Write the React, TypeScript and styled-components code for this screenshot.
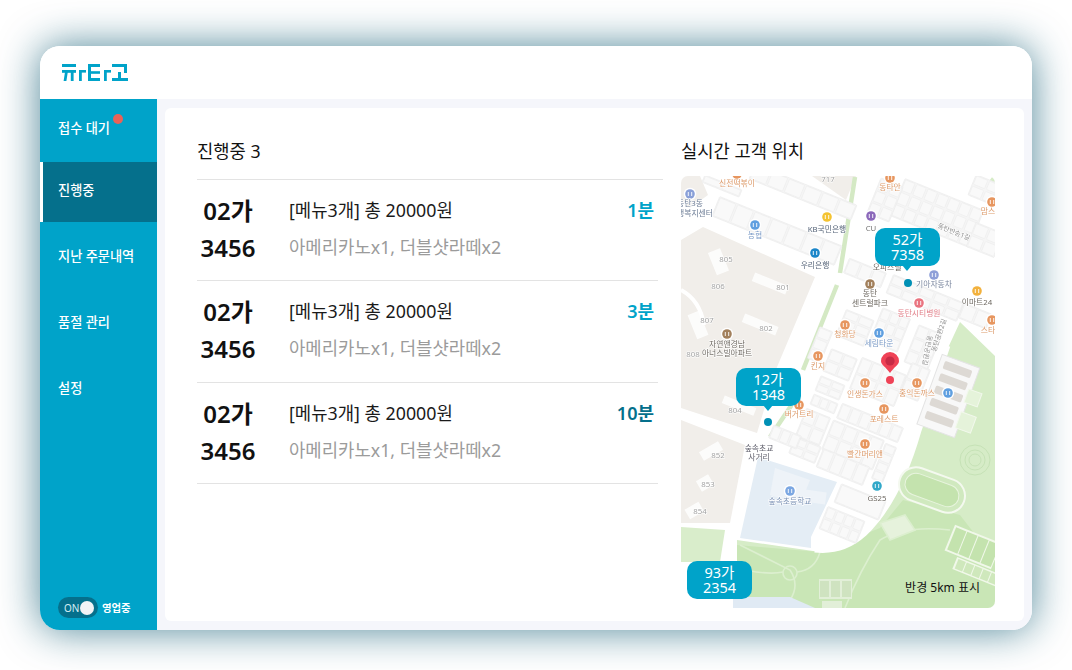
import React from 'react';
import styled, { createGlobalStyle } from 'styled-components';

const Global = createGlobalStyle`
  html, body { margin: 0; background: #fff; }
  body { font-family: "Noto Sans", "Noto Sans CJK KR", sans-serif; }
  * { box-sizing: border-box; }
`;
const Page = styled.div`
  width: 1072px; height: 670px; padding: 46px 40px 40px; overflow: hidden;
`;
const Frame = styled.div`
  width: 992px; height: 584px; border-radius: 20px; background: #fff; overflow: hidden;
  display: grid; grid-template-rows: 53px 1fr; grid-template-columns: 117px 1fr;
  box-shadow: 0 0 40px rgba(10, 88, 112, .72);
`;
const Header = styled.header`
  grid-column: 1 / 3; display: flex; align-items: center; padding-left: 22px; background: #fff;
`;
const Sidebar = styled.aside`
  background: #00a3c9; display: flex; flex-direction: column; justify-content: space-between;
  padding-bottom: 12px;
`;
const Nav = styled.nav`display: flex; flex-direction: column;`;
const NavItem = styled.div<{ $active?: boolean }>`
  height: 60px; margin-bottom: 6px; padding: 0 0 6px ${p => (p.$active ? 15 : 18)}px;
  display: flex; align-items: center; color: #fff; font-size: 13.2px; font-weight: 500;
  background: ${p => (p.$active ? '#05708c' : 'transparent')};
  border-left: ${p => (p.$active ? '3px solid #fff' : '0')};
  &:first-child { height: 63px; margin-bottom: 0; }
`;
const NavLabel = styled.span`position: relative;`;
const Badge = styled.i`
  position: absolute; right: -13px; top: -4px; width: 10px; height: 10px; border-radius: 50%;
  background: #ea6257;
`;
const ToggleRow = styled.div`display: flex; align-items: center; gap: 4px; padding-left: 18px;`;
const Toggle = styled.div`
  width: 40px; height: 21px; border-radius: 11px; background: #05708c; display: flex;
  align-items: center; justify-content: space-between; padding: 0 4px 0 6px;
  color: #d5eef4; font-size: 10px;
`;
const Knob = styled.i`width: 14px; height: 14px; border-radius: 50%; background: #f1f3f6;`;
const ToggleText = styled.span`color: #fff; font-size: 10.4px; font-weight: 700;`;
const Content = styled.main`background: #f5f6fb; padding: 9px 8px 9px 8px; display: flex;`;
const Card = styled.section`
  flex: 1; background: #fff; border-radius: 6px; padding: 28px 29px 13px 32px;
  display: grid; grid-template-columns: 466px 314px; column-gap: 18px;
`;
const Column = styled.div`display: flex; flex-direction: column; min-height: 0;`;
const ListTitle = styled.h2`
  margin: 0; font-size: 17.7px; line-height: 30px; font-weight: 400; color: #111;
  padding-bottom: 13px; border-bottom: 1.5px solid #e3e3e3;
`;
const MapTitle = styled.h2`
  margin: 0 0 10px; font-size: 17.7px; line-height: 30px; font-weight: 400; color: #111;
`;
const Orders = styled.div`width: 461px;`;
const Order = styled.article`
  height: 101.3px; border-bottom: 1.5px solid #e3e3e3; display: grid;
  grid-template-columns: 62px 1fr auto; column-gap: 30px; padding: 12px 4px 0 0;
  align-items: start;
`;
const Plate = styled.div`
  text-align: center; font-size: 24px; line-height: 37px; font-weight: 600; color: #111;
  white-space: nowrap;
`;
const Info = styled.div`line-height: 37px;`;
const Summary = styled.div`font-size: 17.8px; color: #1a1a1a;`;
const Items = styled.div`font-size: 17.8px; color: #9b9b9b;`;
const Elapsed = styled.div<{ $late?: boolean }>`
  font-size: 18px; line-height: 37px; font-weight: 600; color: ${p => (p.$late ? '#05708c' : '#00a3c9')};
`;
const MapBox = styled.div`
  position: relative; width: 314px; height: 432px; border-radius: 7px; overflow: hidden; background: #fff;
`;
const MapSvg = styled.svg`display: block; filter: blur(.45px);`;
const MapLabel = styled.text<{ $c?: string; $s?: number }>`
  font-family: "Noto Sans", "Noto Sans CJK KR", sans-serif; font-size: ${p => p.$s ?? 7.8}px; text-anchor: middle;
  fill: ${p => p.$c ?? '#6d7783'}; paint-order: stroke; stroke: #fff; stroke-width: 1.2px;
`;
const Bubble = styled.div<{ $x: number; $y: number; $tail?: boolean }>`
  position: absolute; left: ${p => p.$x}px; top: ${p => p.$y}px; width: 65px; height: 38px;
  background: #00a3c9; border-radius: 10px; color: #fff; font-size: 14.5px; line-height: 15.5px;
  text-align: center; padding-top: 3.5px;
  ${p => p.$tail ? `&::after { content: ''; position: absolute; left: 27px; bottom: -5px; width: 0; height: 0;
    border: 5.5px solid transparent; border-bottom: 0; border-top: 6px solid #00a3c9; }` : ''}
`;
const Dot = styled.i<{ $x: number; $y: number }>`
  position: absolute; left: ${p => p.$x}px; top: ${p => p.$y}px; width: 8px; height: 8px;
  border-radius: 50%; background: #0090b5;
`;
const Radius = styled.div`
  position: absolute; right: 15px; bottom: 12px; font-size: 12px; color: #111; line-height: 16px;
`;

const Logo = () => (
  <svg width="68" height="20" viewBox="0 0 68 20" fill="#00a3c9">
    <rect x="0" y="1" width="14" height="3" /><rect x="0" y="7" width="14" height="2.8" />
    <polygon points="3,9 5.8,9 4.4,18 1.6,18" /><rect x="8.8" y="9" width="2.8" height="9" />
    <rect x="17" y="7" width="7" height="2.6" /><rect x="17" y="7" width="2.8" height="11" />
    <rect x="26" y="1" width="12" height="3" /><rect x="26" y="8.2" width="12" height="2.6" /><rect x="26" y="15" width="12" height="3" /><rect x="26" y="1" width="3" height="17" />
    <rect x="42" y="7" width="7" height="2.6" /><rect x="42" y="7" width="2.8" height="11" />
    <rect x="50" y="1" width="15" height="3" /><rect x="62" y="1" width="3" height="9" />
    <rect x="56" y="9" width="3" height="7" /><rect x="50" y="15" width="16" height="3" />
  </svg>
);

type Blk = [number, number, number, number, number?, number?, number?];
// cx, cy, w, h, cols, rows, angle
const BLOCKS: Blk[] = [
  [777, 231, 132, 21, 7, 1], [803, 192, 110, 16, 6, 1], [722, 186, 40, 8, 2, 1],
  [937, 213, 85, 40, 7, 3], [885, 200, 24, 38, 2, 3], [985, 240, 30, 26, 2, 2],
  [985, 190, 28, 22, 2, 2], [865, 273, 40, 16, 3, 1], [925, 298, 76, 20, 5, 2],
  [975, 316, 30, 16, 2, 1], [855, 328, 30, 28, 2, 3], [890, 330, 30, 36, 3, 3],
  [923, 348, 25, 40, 2, 3], [840, 365, 28, 24, 2, 2], [878, 382, 48, 34, 4, 2],
  [915, 382, 20, 34, 2, 2], [830, 388, 26, 16, 2, 2], [824, 404, 26, 11, 3, 1],
  [870, 423, 66, 16, 6, 1], [813, 427, 26, 30, 2, 2], [853, 445, 55, 32, 4, 2],
  [805, 450, 28, 18, 2, 2], [843, 467, 50, 20, 4, 1], [884, 463, 12, 38, 1, 4],
  [860, 502, 48, 20, 1, 1], [842, 525, 40, 24, 4, 2], [785, 437, 14, 30, 1, 3, 112],
  [820, 345, 14, 34, 1, 3],
];
type Poi = [number, number, string, string];
const ICONS: [number, number, string][] = [
  [737, 174, '#e7965f'], [890, 178, '#e7965f'], [690, 194, '#8aa0d8'], [755, 225, '#5f9fe0'], [827, 217, '#f4c331'],
  [871, 216, '#8b68ba'], [815, 253, '#1b86c9'], [870, 284, '#a2805c'], [934, 275, '#8e9fd8'], [977, 291, '#f2b13d'],
  [919, 303, '#ea7480'], [992, 320, '#e7965f'], [992, 202, '#e7965f'], [845, 325, '#e7965f'], [879, 333, '#5f9fe0'],
  [727, 334, '#a2805c'], [818, 356, '#e7965f'], [865, 383, '#e7965f'], [917, 383, '#e7965f'], [884, 409, '#e7965f'],
  [948, 393, '#5f9fe0'], [799, 405, '#e7965f'], [865, 444, '#e7965f'], [877, 486, '#31a8c9'], [790, 491, '#7ba7e2'],
];
const LABELS: Poi[] = [
  [737, 186, '신전떡볶이', '#dc9a6a'], [828, 182, '717', '#a3a3a3'], [890, 190, '동타안', '#dc9a6a'],
  [690, 206, '동탄3동', '#6d7d96'], [695, 216, '행복지센터', '#6d7d96'], [755, 238, '농협', '#7b9bc7'],
  [827, 232, 'KB국민은행', '#566579'], [871, 231, 'CU', '#757575'], [815, 268, '우리은행', '#566579'],
  [726, 262, '805', '#a3a3a3'], [718, 289, '806', '#a3a3a3'], [783, 290, '801', '#a3a3a3'], [707, 323, '807', '#a3a3a3'],
  [766, 331, '802', '#a3a3a3'], [693, 357, '808', '#a3a3a3'], [870, 296, '동탄', '#6f6a63'], [870, 306, '센트럴파크', '#6f6a63'],
  [934, 287, '기아자동차', '#7b879f'], [977, 305, '이마트24', '#6f6a63'], [919, 316, '동탄시티병원', '#e2808a'],
  [988, 333, '스타', '#dc9a6a'], [988, 214, '맘스', '#dc9a6a'], [845, 337, '청화당', '#dc9a6a'], [879, 346, '세림타운', '#7b9bc7'],
  [727, 347, '자연앤경남', '#6f6a63'], [727, 356, '아너스빌아파트', '#6f6a63'], [818, 369, '킨지', '#dc9a6a'],
  [865, 397, '인생돈가스', '#dc9a6a'], [917, 396, '홍익돈까스', '#dc9a6a'], [884, 422, '포레스트', '#dc9a6a'],
  [799, 417, '버거트리', '#dc9a6a'], [865, 457, '빨간머리앤', '#dc9a6a'], [877, 501, 'GS25', '#6f6a63'],
  [790, 504, '숲속초등학교', '#7b92b5'], [759, 451, '숲속초교', '#5f5f6b'], [759, 460, '사거리', '#5f5f6b'],
  [735, 413, '804', '#a3a3a3'], [718, 458, '852', '#a3a3a3'], [708, 487, '853', '#a3a3a3'], [700, 514, '854', '#a3a3a3'],
  [887, 270, '오피스텔', '#6f6a63'],
];

const Block = ({ b }: { b: Blk }) => {
  const [cx, cy, w, h, cols = 1, rows = 1, a = 22] = b;
  const cw = w / cols, ch = h / rows;
  const cells: React.ReactNode[] = [];
  for (let r = 0; r < rows; r++) for (let c = 0; c < cols; c++) {
    cells.push(<rect key={`${r}-${c}`} x={-w / 2 + c * cw + 1} y={-h / 2 + r * ch + 1} width={cw - 2} height={ch - 2} rx="1" fill="#f9f9f9" stroke="#eeeeee" strokeWidth=".7" />);
  }
  return <g transform={`translate(${cx} ${cy}) rotate(${a})`}><rect x={-w / 2} y={-h / 2} width={w} height={h} rx="1" fill="#f5f5f5" stroke="#ececec" strokeWidth=".6" />{cells}</g>;
};

const CityMap = () => (
  <MapSvg width="314" height="432" viewBox="681 176 314 432">
    <rect x="681" y="176" width="314" height="432" fill="#fff" />
    {/* beige plots */}
    <polygon points="681,240 703,227 815,277 777,367 757,433 681,408" fill="#f1eeea" />
    <polygon points="681,420 745,445 730,523 681,523" fill="#f1eeea" />
    <polygon points="812,176 856,176 846,200" fill="#f1eeea" />
    <polygon points="681,176 700,176 708,195 690,208 681,200" fill="#f1eeea" />
    <g fill="#fff" opacity=".85">
      <rect x="712" y="250" width="13" height="24" transform="rotate(-22 718 262)" />
      <rect x="752" y="279" width="36" height="9" transform="rotate(22 770 284)" />
      <rect x="692" y="312" width="12" height="26" transform="rotate(-22 698 325)" />
      <rect x="742" y="320" width="36" height="9" transform="rotate(22 760 325)" />
      <rect x="722" y="402" width="34" height="8" transform="rotate(22 740 406)" />
      <rect x="698" y="477" width="14" height="12" transform="rotate(-30 705 483)" />
      <rect x="700" y="446" width="22" height="10" transform="rotate(-30 711 451)" />
      <rect x="686" y="505" width="16" height="11" transform="rotate(-30 694 510)" />
    </g>
    <path d="M681 290 Q700 300 704 325" fill="none" stroke="#fff" strokeWidth="4" />
    <path d="M681 415 L757 440" stroke="#fff" strokeWidth="8" />
    {/* park */}
    <polygon points="960,322 995,356 995,608 737,608 737,540 820,552 850,545 880,520 900,478 920,420 947,350" fill="#d6ecc7" />
    <polygon points="681,527 725,530 720,562 681,562" fill="#d9edcb" />
    <polygon points="820,552 880,528 903,500 960,515 995,560 995,608 737,608 737,545" fill="#c9e6b6" />
    <polygon points="993,176 995,176 995,190 985,186" fill="#d6ecc7" />
    <g fill="none" stroke="#dcefcf" strokeWidth="1.6">
      <path d="M740 545 Q770 560 790 570 Q800 585 790 600" />
      <circle cx="790" cy="573" r="7" />
      <path d="M745 570 Q770 575 783 572 M797 572 Q815 570 820 552 M845 608 Q860 570 880 540 Q905 525 950 530" />
      <path d="M880 523 L905 515 L915 530 L890 540 Z" fill="#e6f2dc" />
    </g>
    <g fill="none" stroke="#c6e2b6" strokeWidth="1"><circle cx="975" cy="460" r="10" /><circle cx="975" cy="460" r="6" /><circle cx="975" cy="460" r="15" /></g>
    <path d="M945 345 L916 430 Q896 500 862 532 Q842 550 815 547" fill="none" stroke="#fff" strokeWidth="11" />
    {/* green strip */}
    <path d="M855 177 L840 273 M837 285 L803 370 M793 403 L770 437" fill="none" stroke="#d4e9c4" strokeWidth="4.5" />
    {/* school */}
    <polygon points="758,457 837,482 811,537 811,548 740,538" fill="#e4edf5" />
    <polygon points="775,468 810,480 800,505 770,495" fill="#eef3f8" />
    <rect x="790" y="490" width="36" height="12" fill="#eef3f8" transform="rotate(8 808 496)" />
    <polygon points="733,597 790,597 815,608 733,608" fill="#e0eaf4" />
    {BLOCKS.map((b, i) => <Block key={i} b={b} />)}
    {/* parking lot */}
    <g transform="translate(948 397) rotate(20)">
      <rect x="-20" y="-38" width="40" height="74" fill="#f8f8f8" stroke="#e4e4e4" />
      {[-33, -20, -7, 6, 20].map(y => <rect key={y} x="-15" y={y} width="29" height="8" rx="1.5" fill="#ddd9d4" />)}
    </g>
    <rect x="966" y="391" width="14" height="14" fill="#e5f3da" stroke="#f2f8ec" transform="rotate(20 973 398)" />
    <rect x="958" y="414" width="16" height="17" fill="#e5f3da" stroke="#f2f8ec" transform="rotate(20 966 422)" />
    {/* track */}
    <g transform="translate(932 490) rotate(20)">
      <rect x="-34" y="-17" width="68" height="34" rx="17" fill="#d0e9bf" stroke="#f4f9ef" strokeWidth="2" />
      <rect x="-28" y="-11" width="56" height="22" rx="11" fill="#c4e3ae" stroke="#e8f4de" strokeWidth="1" />
    </g>
    {/* sport fields */}
    <g transform="translate(973 547) rotate(22)">
      <rect x="-25" y="-14" width="50" height="28" fill="#f1f8ea" />
      {[-23, -11, 1, 13].map(x => <rect key={x} x={x} y="-12" width="11" height="24" fill="#c4e3ae" />)}
    </g>
    <g transform="translate(977 572) rotate(22)">
      <rect x="-24" y="-6.5" width="48" height="13" fill="#f1f8ea" />
      {[-22, -13, -4, 5, 14].map(x => <rect key={x} x={x} y="-5" width="8" height="10" fill="#cfe8bc" />)}
    </g>
    <g>
      <rect x="819" y="579" width="33" height="20" fill="#e2efd8" />
      {[820, 831, 842].map(x => <rect key={x} x={x} y="581" width="9" height="16" fill="#cfe3c0" />)}
    </g>
    <rect x="822" y="601" width="20" height="7" fill="#e2efd8" />
    {ICONS.map(([x, y, c], i) => <g key={i}><circle cx={x} cy={y} r="6.2" fill="#fff" /><circle cx={x} cy={y} r="4.8" fill={c} /><path d={`M${x - 1.7} ${y - 2}v4M${x + 1.7} ${y - 2}v4`} stroke="#fff" strokeWidth=".9" /></g>)}
    {LABELS.map(([x, y, t, c], i) => <MapLabel key={i} x={x} y={y} $c={c}>{t}</MapLabel>)}
    <MapLabel x="0" y="0" $c="#8d8d8d" $s={6.6} transform="translate(953 234) rotate(22)">동탄반송1길</MapLabel>
    <MapLabel x="0" y="0" $c="#8d8d8d" $s={6.6} transform="translate(925 350) rotate(100)">동탄공원길</MapLabel>
    <MapLabel x="0" y="0" $c="#8d8d8d" $s={6.6} transform="translate(941 336) rotate(-72)">동탄공원2길</MapLabel>
    {/* pin */}
    <path d="M890 373 C886 367 881 365 881 361 A9 9 0 1 1 899 361 C899 365 894 367 890 373 Z" fill="#ef4256" />
    <circle cx="890" cy="361" r="4.6" fill="#c72b45" />
    <circle cx="890" cy="380" r="4" fill="#ef4256" />
  </MapSvg>
);

const ORDERS = [
  { time: '1분', late: false },
  { time: '3분', late: false },
  { time: '10분', late: true },
];

export default function App() {
  return (
    <Page>
      <Global />
      <Frame>
        <Header><Logo /></Header>
        <Sidebar>
          <Nav>
            <NavItem><NavLabel>접수 대기<Badge /></NavLabel></NavItem>
            <NavItem $active>진행중</NavItem>
            <NavItem>지난 주문내역</NavItem>
            <NavItem>품절 관리</NavItem>
            <NavItem>설정</NavItem>
          </Nav>
          <ToggleRow>
            <Toggle>ON<Knob /></Toggle>
            <ToggleText>영업중</ToggleText>
          </ToggleRow>
        </Sidebar>
        <Content>
          <Card>
            <Column>
              <ListTitle>진행중 3</ListTitle>
              <Orders>
                {ORDERS.map(o => (
                  <Order key={o.time}>
                    <Plate>02가<br />3456</Plate>
                    <Info>
                      <Summary>[메뉴3개] 총 20000원</Summary>
                      <Items>아메리카노x1, 더블샷라떼x2</Items>
                    </Info>
                    <Elapsed $late={o.late}>{o.time}</Elapsed>
                  </Order>
                ))}
              </Orders>
            </Column>
            <Column>
              <MapTitle>실시간 고객 위치</MapTitle>
              <MapBox>
                <CityMap />
                <Bubble $x={194} $y={52} $tail>52가<br />7358</Bubble>
                <Dot $x={223} $y={103} />
                <Bubble $x={55} $y={192} $tail>12가<br />1348</Bubble>
                <Dot $x={83} $y={242} />
                <Bubble $x={6} $y={385}>93가<br />2354</Bubble>
                <Radius>반경 5km 표시</Radius>
              </MapBox>
            </Column>
          </Card>
        </Content>
      </Frame>
    </Page>
  );
}
